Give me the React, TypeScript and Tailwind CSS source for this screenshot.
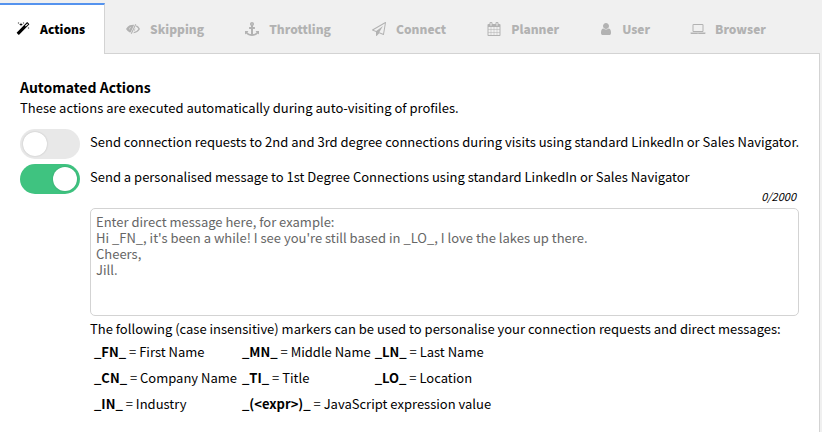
import { useState } from "react";
import type { ReactNode } from "react";

type Glyph = { viewBox: string; box: string; paths: string[] };

const glyphs: Record<string, Glyph> = {
  magic: {
    viewBox: "0 0 1792 1792",
    box: "w-[18px]",
    paths: [
      "M1254 581l293-293-107-107-293 293zm447-293q0 27-18 45l-1286 1286q-18 18-45 18t-45-18l-198-198q-18-18-18-45t18-45l1286-1286q18-18 45-18t45 18l198 198q18 18 18 45zm-1351-190l98 30-98 30-30 98-30-98-98-30 98-30 30-98zm350 162l196 60-196 60-60 196-60-196-196-60 196-60 60-196zm930 478l98 30-98 30-30 98-30-98-98-30 98-30 30-98zm-640-640l98 30-98 30-30 98-30-98-98-30 98-30 30-98z",
    ],
  },
  lowVision: {
    viewBox: "0 0 1792 1792",
    box: "w-[18px]",
    paths: [
      "M0 900Q190 560 480 430Q760 320 1050 350L610 1310L490 1340Q180 1200 0 900ZM570 640Q430 740 430 930L500 960Q500 790 610 710Z",
      "M1190 260L1310 320L730 1540L610 1480Z",
      "M1350 410Q1640 560 1792 880Q1500 1360 940 1440L1020 1280Q1380 1200 1590 890Q1470 690 1270 570Z",
      "M1190 740L960 1220Q1250 1080 1190 740Z",
    ],
  },
  anchor: {
    viewBox: "0 0 1792 1792",
    box: "w-[18px]",
    paths: [
      "M960 256q0-26-19-45t-45-19-45 19-19 45 19 45 45 19 45-19 19-45zm832 928v352q0 22-20 30-8 2-12 2-13 0-23-9l-93-93q-119 143-318.5 226.5t-429.5 83.5-429.5-83.5-318.5-226.5l-93 93q-9 9-23 9-4 0-12-2-20-8-20-30v-352q0-14 9-23t23-9h352q22 0 30 20 8 19-7 35l-100 100q67 91 189.5 153.5t271.5 82.5v-647h-192q-26 0-45-19t-19-45v-128q0-26 19-45t45-19h192v-163q-58-34-93-92.5t-35-128.5q0-106 75-181t181-75 181 75 75 181q0 70-35 128.5t-93 92.5v163h192q26 0 45 19t19 45v128q0 26-19 45t-45 19h-192v647q149-20 271.5-82.5t189.5-153.5l-100-100q-15-16-7-35 8-20 30-20h352q14 0 23 9t9 23z",
    ],
  },
  plane: {
    viewBox: "0 0 1792 1792",
    box: "w-[18px]",
    paths: [
      "M1764 11q33 24 27 64l-256 1536q-5 29-32 45-14 8-31 8-11 0-24-5l-527-215-298 327q-18 21-47 21-14 0-23-4-19-7-30-23.5t-11-36.5v-452l-472-193q-37-14-40-55-3-39 32-59l1664-960q35-21 68 2zm-342 1499l221-1323-1434 827 336 137 863-639-478 797z",
    ],
  },
  calendar: {
    viewBox: "0 0 1792 1792",
    box: "w-[18px]",
    paths: [
      "M192 1664h288v-288h-288v288zm352 0h320v-288h-320v288zm-352-352h288v-320h-288v320zm352 0h320v-320h-320v320zm-352-384h288v-288h-288v288zm736 736h320v-288h-320v288zm-384-736h320v-288h-320v288zm768 736h288v-288h-288v288zm-384-352h320v-320h-320v320zm-352-864v-288q0-13-9.5-22.5t-22.5-9.5h-64q-13 0-22.5 9.5t-9.5 22.5v288q0 13 9.5 22.5t22.5 9.5h64q13 0 22.5-9.5t9.5-22.5zm736 864h288v-320h-288v320zm-384-384h320v-288h-320v288zm384 0h288v-288h-288v288zm32-480v-288q0-13-9.5-22.5t-22.5-9.5h-64q-13 0-22.5 9.5t-9.5 22.5v288q0 13 9.5 22.5t22.5 9.5h64q13 0 22.5-9.5t9.5-22.5zm384-64v1280q0 52-38 90t-90 38h-1408q-52 0-90-38t-38-90v-1280q0-52 38-90t90-38h128v-96q0-66 47-113t113-47h64q66 0 113 47t47 113v96h384v-96q0-66 47-113t113-47h64q66 0 113 47t47 113v96h128q52 0 90 38t38 90z",
    ],
  },
  user: {
    viewBox: "0 0 1792 1792",
    box: "w-4",
    paths: [
      "M1536 1399q0 109-62.5 187t-150.5 78h-854q-88 0-150.5-78t-62.5-187q0-85 8.5-160.5t31.5-152 58.5-131 94-89 134.5-34.5q131 128 313 128t313-128q76 0 134.5 34.5t94 89 58.5 131 31.5 152 8.5 160.5zm-256-887q0 159-112.5 271.5t-271.5 112.5-271.5-112.5-112.5-271.5 112.5-271.5 271.5-112.5 271.5 112.5 112.5 271.5z",
    ],
  },
  laptop: {
    viewBox: "64 0 1792 1792",
    box: "w-[18px]",
    paths: [
      "M416 1280q-66 0-113-47t-47-113v-704q0-66 47-113t113-47h1088q66 0 113 47t47 113v704q0 66-47 113t-113 47h-1088zm-32-864v704q0 13 9.5 22.5t22.5 9.5h1088q13 0 22.5-9.5t9.5-22.5v-704q0-13-9.5-22.5t-22.5-9.5h-1088q-13 0-22.5 9.5t-9.5 22.5zm1376 928h160v96q0 40-47 68t-113 28h-1600q-66 0-113-28t-47-68v-96h1760zm-720 96q16 0 16-16t-16-16h-160q-16 0-16 16t16 16h160z",
    ],
  },
};

const tabs = [
  { label: "Actions", icon: "magic" },
  { label: "Skipping", icon: "lowVision" },
  { label: "Throttling", icon: "anchor" },
  { label: "Connect", icon: "plane" },
  { label: "Planner", icon: "calendar" },
  { label: "User", icon: "user" },
  { label: "Browser", icon: "laptop" },
];

function Icon({ name }: { name: string }) {
  const glyph = glyphs[name];
  return (
    <span className={`flex shrink-0 justify-center ${glyph.box}`}>
      <svg viewBox={glyph.viewBox} className="size-[14px] overflow-visible" fill="currentColor" aria-hidden="true">
        {glyph.paths.map((d) => (
          <path key={d} d={d} fillRule={name === "lowVision" ? "evenodd" : "nonzero"} />
        ))}
      </svg>
    </span>
  );
}

function Toggle({ id, defaultChecked, children }: { id: string; defaultChecked?: boolean; children: ReactNode }) {
  return (
    <div className="flex gap-[10px]">
      <input
        id={id}
        type="checkbox"
        defaultChecked={defaultChecked}
        className="h-[30px] w-[60px] shrink-0 cursor-pointer appearance-none rounded-full bg-[#e8e8e8] p-[3px] before:block before:size-6 before:rounded-full before:bg-white before:shadow-[0_0_2px_rgba(0,0,0,0.2)] before:content-[''] checked:bg-[#3fc380] checked:before:ml-[30px]"
      />
      <label htmlFor={id} className="pt-[3px]">
        {children}
      </label>
    </div>
  );
}

function Marker({ code, children }: { code: string; children: ReactNode }) {
  return (
    <>
      <b>{code}</b> = {children}
    </>
  );
}

export default function App() {
  const [active, setActive] = useState("Actions");
  const [message, setMessage] = useState("");

  return (
    <div className="min-h-screen bg-[#f0f0f0] pt-[3px] pr-[2px] font-['Noto_Sans_CJK_SC',sans-serif] text-[13px] leading-5 text-black">
      <div role="tablist" className="relative z-10 -mb-px flex">
        {tabs.map(({ label, icon }) => (
          <button
            key={label}
            type="button"
            role="tab"
            aria-selected={active === label}
            onClick={() => setActive(label)}
            className="flex h-[51px] items-center gap-2 border-t-2 border-r border-transparent px-[19px] pb-[2px] text-[12px] font-black text-[#b2b2b2] first:pl-[14px] aria-selected:border-t-[#5593ee] aria-selected:border-r-[#d3d3d3] aria-selected:bg-white aria-selected:text-black"
          >
            <Icon name={icon} />
            {label}
          </button>
        ))}
      </div>

      <main className="min-h-[379px] border-t border-r border-[#d3d3d3] bg-white px-5 pt-[23px]">
        <h1 className="mb-px text-[14px] font-bold">Automated Actions</h1>
        <p>These actions are executed automatically during auto-visiting of profiles.</p>

        <div className="mt-[11px] -mr-4 flex flex-col gap-[5px]">
          <Toggle id="connect">
            Send connection requests to 2nd and 3rd degree connections during visits using standard LinkedIn or Sales
            Navigator.
          </Toggle>
          <Toggle id="message" defaultChecked>
            Send a personalised message to 1st Degree Connections using standard LinkedIn or Sales Navigator
          </Toggle>
        </div>

        <div className="pl-[70px]">
          <div className="-mt-1.5 pr-[3px] pb-1 text-right text-[11px] leading-4 italic">{message.length}/2000</div>
          <textarea
            aria-label="Direct message"
            maxLength={2000}
            value={message}
            onChange={(e) => setMessage(e.target.value)}
            placeholder={
              "Enter direct message here, for example:\nHi _FN_, it's been a while! I see you're still based in _LO_, I love the lakes up there.\nCheers,\nJill."
            }
            className="block h-[108px] w-full resize-none rounded-[5px] border border-[#d3d3d3] px-[5px] py-[5px] leading-4 placeholder:text-[#666]"
          />
          <p className="mt-[3px]">
            The following (case insensitive) markers can be used to personalise your connection requests and direct
            messages:
          </p>
          <table className="[&_td]:h-[26px] [&_td]:pl-1 [&_td]:whitespace-nowrap">
            <tbody>
              <tr>
                <td className="w-[148px]"><Marker code="_FN_">First Name</Marker></td>
                <td className="w-[132px]"><Marker code="_MN_">Middle Name</Marker></td>
                <td><Marker code="_LN_">Last Name</Marker></td>
              </tr>
              <tr>
                <td><Marker code="_CN_">Company Name</Marker></td>
                <td><Marker code="_TI_">Title</Marker></td>
                <td><Marker code="_LO_">Location</Marker></td>
              </tr>
              <tr>
                <td><Marker code="_IN_">Industry</Marker></td>
                <td colSpan={2}><Marker code="_(<expr>)_">JavaScript expression value</Marker></td>
              </tr>
            </tbody>
          </table>
        </div>
      </main>
    </div>
  );
}
